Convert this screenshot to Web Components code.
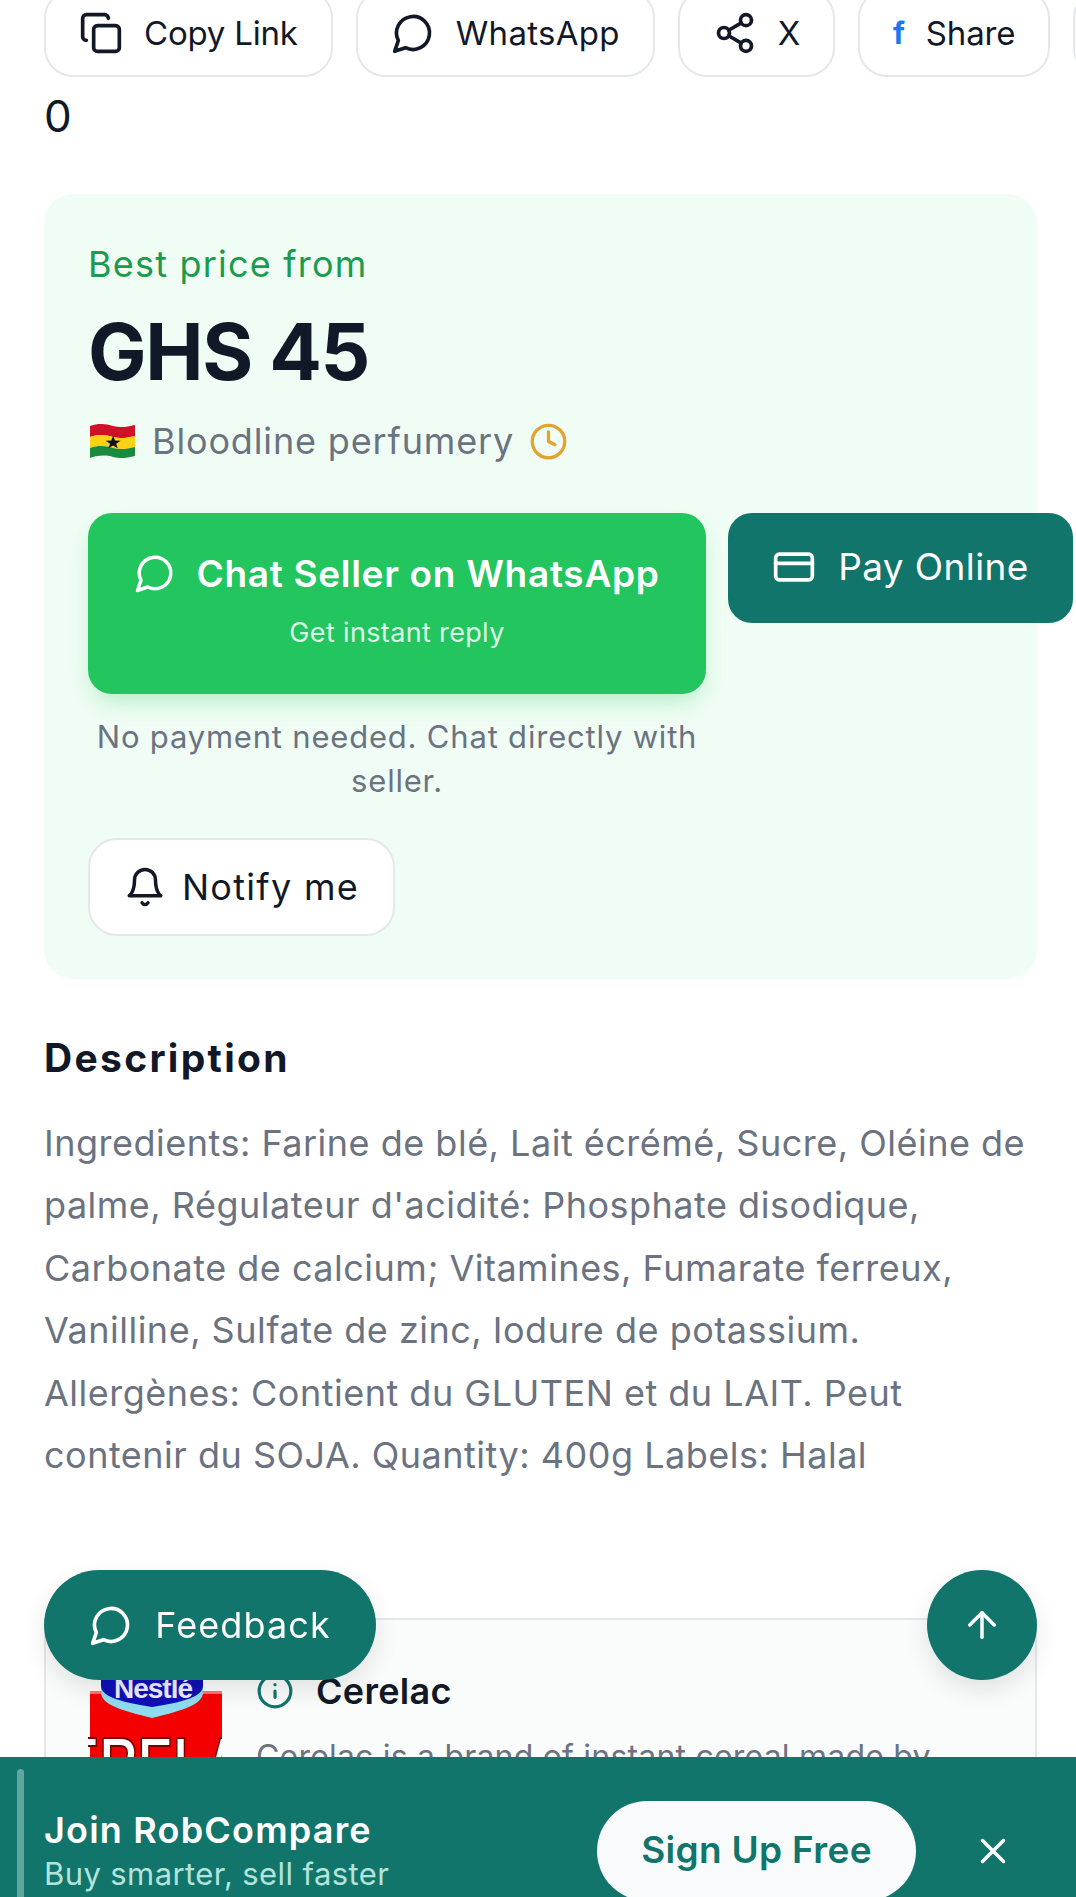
<!DOCTYPE html>
<html lang="en">
<head>
<meta charset="utf-8">
<title>Cerelac - RobCompare</title>
<style>
  html, body { margin: 0; height: 1897px; overflow: hidden; background: #fff; }
  body { font-family: Inter, "Noto Sans", sans-serif; color: #111827; }
  page-main { display: block; }
</style>
</head>
<body>
<script>
const ICONS = {
  copy: '<rect x="8" y="8" width="14" height="14" rx="2"/><path d="M4 16c-1.1 0-2-.9-2-2V4c0-1.1.9-2 2-2h10c1.1 0 2 .9 2 2"/>',
  chat: '<path d="M7.9 20A9 9 0 1 0 4 16.1L2 22Z"/>',
  share: '<circle cx="18" cy="5" r="3"/><circle cx="6" cy="12" r="3"/><circle cx="18" cy="19" r="3"/><path d="m8.59 13.51 6.83 3.98"/><path d="m15.41 6.51-6.82 3.98"/>',
  clock: '<circle cx="12" cy="12" r="10"/><path d="M12 6v6l4 2"/>',
  card: '<rect x="2" y="5" width="20" height="14" rx="2"/><path d="M2 10h20"/>',
  bell: '<path d="M6 8a6 6 0 0 1 12 0c0 7 3 9 3 9H3s3-2 3-9"/><path d="M10.3 21a1.94 1.94 0 0 0 3.4 0"/>',
  info: '<circle cx="12" cy="12" r="10"/><path d="M12 16v-4"/><path d="M12 8h.01"/>',
  up: '<path d="m5 12 7-7 7 7"/><path d="M12 19V5"/>',
  x: '<path d="M18 6 6 18"/><path d="m6 6 12 12"/>'
};

class UiIcon extends HTMLElement {
  connectedCallback() {
    const size = this.getAttribute('size') || 42;
    this.attachShadow({ mode: 'open' });
    this.shadowRoot.innerHTML = `
      <style>
        :host { display: inline-flex; flex: none; }
        svg { display: block; fill: none; stroke: currentColor; stroke-width: 2; stroke-linecap: round; stroke-linejoin: round; }
      </style>
      <svg width="${size}" height="${size}" viewBox="0 0 24 24">${ICONS[this.getAttribute('name')]}</svg>`;
  }
}
customElements.define('ui-icon', UiIcon);

class ShareChip extends HTMLElement {
  connectedCallback() {
    this.attachShadow({ mode: 'open' });
    this.shadowRoot.innerHTML = `
      <style>
        :host {
          display: flex;
          flex: none;
          align-items: center;
          gap: 21px;
          box-sizing: border-box;
          height: 88px;
          padding: 0 33px;
          background: #fff;
          border: 2px solid #e5e7eb;
          border-radius: 29px;
          font-size: 33px;
          letter-spacing: -0.2px;
          color: #111827;
        }
      </style>
      <slot></slot>`;
  }
}
customElements.define('share-chip', ShareChip);

class ShareRow extends HTMLElement {
  connectedCallback() {
    this.attachShadow({ mode: 'open' });
    this.shadowRoot.innerHTML = `
      <style>
        :host {
          display: flex;
          gap: 23px;
          margin-top: -11px;
          padding-left: 44px;
          overflow: hidden;
        }
      </style>
      <slot></slot>`;
  }
}
customElements.define('share-row', ShareRow);

class PriceCard extends HTMLElement {
  connectedCallback() {
    this.attachShadow({ mode: 'open' });
    this.shadowRoot.innerHTML = `
      <style>
        :host {
          display: block;
          box-sizing: border-box;
          width: 993px;
          height: 785px;
          margin: 50px 0 0 44px;
          padding: 44px;
          background: #f0fdf4;
          border-radius: 29px;
        }
        .label { font-size: 36px; line-height: 52px; color: #1a9c4c; letter-spacing: 1.2px; }
        .price {
          margin-top: 18px;
          font-size: 78px;
          line-height: 88px;
          font-weight: 700;
          letter-spacing: -1.3px;
          color: #111827;
        }
        .seller {
          display: flex;
          align-items: center;
          margin-top: 19px;
          height: 52px;
          font-size: 36px;
          color: #6b7280;
          letter-spacing: 0.85px;
        }
        .seller svg { display: block; margin: 0 17px 0 2px; }
        .seller ui-icon { margin-left: 15px; color: #e3a32f; }
        .actions { display: flex; align-items: flex-start; gap: 22px; margin-top: 46px; }
        .main { flex: none; width: 618px; }
        .note {
          margin: 21px 0 0;
          font-size: 31px;
          line-height: 44px;
          text-align: center;
          color: #6b7280;
          letter-spacing: 0.8px;
        }
        notify-button { margin-top: 35px; }
      </style>
      <div class="label">Best price from</div>
      <div class="price">GHS 45</div>
      <div class="seller">
        <svg width="45" height="36" viewBox="0 0 39 36" preserveAspectRatio="none" aria-hidden="true">
          <path d="M0 3c8-3 14-2 20 0s12 1 19-1v11c-7 2-13 3-19 1S8 11 0 14z" fill="#ce1126"/>
          <path d="M0 14c8-3 14-2 20 0s12 1 19-1v11c-7 2-13 3-19 1S8 22 0 25z" fill="#fcd116"/>
          <path d="M0 25c8-3 14-2 20 0s12 1 19-1v9c-7 2-13 3-19 1S8 32 0 35z" fill="#1b8a3e"/>
          <path d="M20 13l1.7 4.6 4.8.1-3.8 3 1.4 4.6-4.1-2.7-4 2.7 1.4-4.6-3.8-3 4.8-.1z" fill="#111"/>
        </svg>
        <span>Bloodline perfumery</span>
        <ui-icon name="clock" size="39"></ui-icon>
      </div>
      <div class="actions">
        <div class="main">
          <whatsapp-button></whatsapp-button>
          <p class="note">No payment needed. Chat directly with seller.</p>
        </div>
        <pay-button></pay-button>
      </div>
      <notify-button></notify-button>`;
  }
}
customElements.define('price-card', PriceCard);

class WhatsappButton extends HTMLElement {
  connectedCallback() {
    this.attachShadow({ mode: 'open' });
    this.shadowRoot.innerHTML = `
      <style>
        :host {
          display: block;
          box-sizing: border-box;
          height: 181px;
          padding-top: 36px;
          background: #22c55e;
          border-radius: 24px;
          color: #fff;
          text-align: center;
          box-shadow: 0 12px 24px -6px rgba(34, 197, 94, .3);
        }
        .title {
          display: flex;
          align-items: center;
          justify-content: center;
          gap: 20px;
          height: 48px;
          font-size: 37px;
          font-weight: 600;
          letter-spacing: 0.7px;
        }
        .sub { margin-top: 18px; font-size: 27px; line-height: 36px; color: #dcfce7; letter-spacing: 0.35px; }
      </style>
      <div class="title"><ui-icon name="chat" size="42"></ui-icon><span>Chat Seller on WhatsApp</span></div>
      <div class="sub">Get instant reply</div>`;
  }
}
customElements.define('whatsapp-button', WhatsappButton);

class PayButton extends HTMLElement {
  connectedCallback() {
    this.attachShadow({ mode: 'open' });
    this.shadowRoot.innerHTML = `
      <style>
        :host {
          display: flex;
          flex: none;
          align-items: center;
          justify-content: center;
          gap: 22px;
          box-sizing: border-box;
          width: 345px;
          height: 110px;
          padding-bottom: 3px;
          background: #11756b;
          border-radius: 24px;
          color: #fff;
          font-size: 37px;
          letter-spacing: 0.4px;
        }
      </style>
      <ui-icon name="card" size="44"></ui-icon><span>Pay Online</span>`;
  }
}
customElements.define('pay-button', PayButton);

class NotifyButton extends HTMLElement {
  connectedCallback() {
    this.attachShadow({ mode: 'open' });
    this.shadowRoot.innerHTML = `
      <style>
        :host {
          display: flex;
          align-items: center;
          justify-content: center;
          gap: 16px;
          box-sizing: border-box;
          width: 307px;
          height: 98px;
          background: #fff;
          border: 2px solid #e5e7eb;
          border-radius: 29px;
          font-size: 36px;
          letter-spacing: 1.3px;
          color: #111827;
        }
      </style>
      <ui-icon name="bell" size="42"></ui-icon><span>Notify me</span>`;
  }
}
customElements.define('notify-button', NotifyButton);

class DescriptionBlock extends HTMLElement {
  connectedCallback() {
    this.attachShadow({ mode: 'open' });
    this.shadowRoot.innerHTML = `
      <style>
        :host { display: block; margin: 54px 39px 0 44px; }
        h2 { margin: 0; font-size: 39px; line-height: 50px; font-weight: 700; color: #111827; letter-spacing: 2.3px; }
        p { margin: 29px 0 0; font-size: 36px; line-height: 62.4px; color: #6b7280; letter-spacing: 0.5px; }
      </style>
      <h2>Description</h2>
      <p><slot></slot></p>`;
  }
}
customElements.define('description-block', DescriptionBlock);

class BrandCard extends HTMLElement {
  connectedCallback() {
    this.attachShadow({ mode: 'open' });
    this.shadowRoot.innerHTML = `
      <style>
        :host {
          display: flex;
          gap: 34px;
          box-sizing: border-box;
          width: 993px;
          height: 300px;
          margin: 132px 0 0 44px;
          padding: 44px 44px 44px 42px;
          background: #fafbfb;
          border: 2px solid #e5e7eb;
          border-radius: 12px;
        }
        .logo { flex: none; display: block; }
        .head { display: flex; align-items: center; gap: 22px; margin-top: 5px; height: 44px; color: #11756b; }
        .head span { font-size: 36px; font-weight: 600; color: #111827; letter-spacing: 0.3px; }
        p { margin: 21px 0 0; font-size: 32px; line-height: 46px; color: #6b7280; letter-spacing: 0.2px; }
      </style>
      <svg class="logo" width="134" height="134" viewBox="0 0 134 134">
        <rect x="2" y="27" width="132" height="107" fill="#f50000"/>
        <path d="M2 27h132v3H2z" fill="#fff" opacity=".45"/>
        <path d="M13 14h102v14c0 12-18 18-51 26C31 46 13 40 13 28z" fill="#8fdcf0"/>
        <path d="M13 0h102v22c0 10-18 16-51 21C31 38 13 32 13 22z" fill="#1010b8"/>
        <text x="65" y="34" text-anchor="middle" font-family="'Liberation Sans', sans-serif" font-weight="700" font-size="28" letter-spacing="-1" fill="#eef">Nestlé</text>
        <text x="-24" y="124" textLength="180" lengthAdjust="spacingAndGlyphs" font-family="'Liberation Sans', sans-serif" font-weight="700" font-size="72" fill="#fff" stroke="#7a0000" stroke-width="2">ERELA</text>
      </svg>
      <div>
        <div class="head"><ui-icon name="info" size="38"></ui-icon><span>Cerelac</span></div>
        <p>Cerelac is a brand of instant cereal made by</p>
      </div>`;
  }
}
customElements.define('brand-card', BrandCard);

class FeedbackButton extends HTMLElement {
  connectedCallback() {
    this.attachShadow({ mode: 'open' });
    this.shadowRoot.innerHTML = `
      <style>
        :host {
          position: fixed;
          left: 44px;
          top: 1570px;
          display: flex;
          align-items: center;
          justify-content: center;
          gap: 22px;
          width: 332px;
          height: 110px;
          background: #11756b;
          border-radius: 55px;
          color: #fff;
          font-size: 36px;
          letter-spacing: 1.1px;
          box-shadow: 0 10px 24px rgba(0, 0, 0, .1);
        }
      </style>
      <ui-icon name="chat" size="44"></ui-icon><span>Feedback</span>`;
  }
}
customElements.define('feedback-button', FeedbackButton);

class ScrollTop extends HTMLElement {
  connectedCallback() {
    this.attachShadow({ mode: 'open' });
    this.shadowRoot.innerHTML = `
      <style>
        :host {
          position: fixed;
          left: 927px;
          top: 1570px;
          display: flex;
          align-items: center;
          justify-content: center;
          width: 110px;
          height: 110px;
          background: #11756b;
          border-radius: 50%;
          color: #fff;
          box-shadow: 0 10px 24px rgba(0, 0, 0, .1);
        }
      </style>
      <ui-icon name="up" size="42"></ui-icon>`;
  }
}
customElements.define('scroll-top', ScrollTop);

class SignupBar extends HTMLElement {
  connectedCallback() {
    this.attachShadow({ mode: 'open' });
    this.shadowRoot.innerHTML = `
      <style>
        :host {
          position: fixed;
          left: 0;
          right: 0;
          top: 1757px;
          height: 140px;
          display: flex;
          align-items: flex-start;
          box-sizing: border-box;
          padding: 44px 0 0 44px;
          background: #11756b;
          overflow: hidden;
          color: #fff;
        }
        .handle { position: absolute; left: 17px; top: 12px; width: 7px; height: 160px; border-radius: 4px; background: #5ea89f; }
        .text { width: 553px; margin-top: 7px; }
        .title { font-size: 36px; line-height: 44px; font-weight: 600; letter-spacing: 1.2px; }
        .sub { font-size: 31px; line-height: 40px; color: #b3e3da; letter-spacing: 0.4px; margin-top: 2px; }
        .cta {
          flex: none;
          display: flex;
          align-items: center;
          justify-content: center;
          box-sizing: border-box;
          width: 319px;
          height: 100px;
          padding-bottom: 4px;
          background: #f8fafc;
          border-radius: 50px;
          color: #11756b;
          font-size: 37px;
          font-weight: 600;
          letter-spacing: 0.3px;
        }
        ui-icon { margin: 29px 0 0 56px; }
      </style>
      <div class="handle"></div>
      <div class="text">
        <div class="title">Join RobCompare</div>
        <div class="sub">Buy smarter, sell faster</div>
      </div>
      <div class="cta">Sign Up Free</div>
      <ui-icon name="x" size="42"></ui-icon>`;
  }
}
customElements.define('signup-bar', SignupBar);

class PageMain extends HTMLElement {
  connectedCallback() {
    this.attachShadow({ mode: 'open' });
    this.shadowRoot.innerHTML = `
      <style>
        :host { display: block; }
        .count { margin: 11px 0 0 44px; font-size: 44px; line-height: 56px; color: #111827; }
        .f { color: #1877f2; font-weight: 700; font-size: 30px; }
        .wa { letter-spacing: .3px; }
      </style>
      <share-row>
        <share-chip><ui-icon name="copy" size="44"></ui-icon>Copy Link</share-chip>
        <share-chip><ui-icon name="chat" size="44"></ui-icon><span class="wa">WhatsApp</span></share-chip>
        <share-chip><ui-icon name="share" size="44"></ui-icon>X</share-chip>
        <share-chip><span class="f">f</span>Share</share-chip>
        <share-chip>&nbsp;</share-chip>
      </share-row>
      <div class="count">0</div>
      <price-card></price-card>
      <description-block>Ingredients: Farine de blé, Lait écrémé, Sucre, Oléine de palme, Régulateur d'acidité: Phosphate disodique, Carbonate de calcium; Vitamines, Fumarate ferreux, Vanilline, Sulfate de zinc, Iodure de potassium. Allergènes: Contient du GLUTEN et du LAIT. Peut contenir du SOJA. Quantity: 400g Labels: Halal</description-block>
      <brand-card></brand-card>
      <feedback-button></feedback-button>
      <scroll-top></scroll-top>
      <signup-bar></signup-bar>`;
  }
}
customElements.define('page-main', PageMain);
</script>
<page-main></page-main>
</body>
</html>
